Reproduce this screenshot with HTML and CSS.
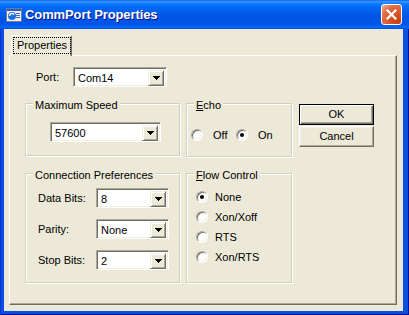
FILE: index.html
```html
<!DOCTYPE html>
<html>
<head>
<meta charset="utf-8">
<link rel="stylesheet" href="styles.css">
</head>
<body>
<div class="window">
  <div class="titlebar">
    <svg class="app-icon" width="16" height="16" viewBox="0 0 16 16">
      <rect x="0.5" y="1.5" width="15" height="13" fill="#f4f4f4" stroke="#6d7b99"/>
      <rect x="1" y="2" width="14" height="2" fill="#2a5bd7"/>
      <circle cx="6" cy="9" r="4" fill="#1f6fe0"/>
      <path d="M3.5 9a2.5 2.5 0 0 1 4.5-1.5" stroke="#fff" stroke-width="1.3" fill="none"/>
      <rect x="10" y="6" width="4" height="1" fill="#3a6bd0"/>
      <rect x="10" y="8" width="4" height="1" fill="#3a6bd0"/>
      <rect x="10" y="10" width="4" height="1" fill="#3a6bd0"/>
    </svg>
    <span class="title">CommPort Properties</span>
    <span class="close">
      <svg width="11" height="11" viewBox="0 0 11 11"><path d="M1.5 1.5l8 8M9.5 1.5l-8 8" stroke="#fff" stroke-width="2.2" stroke-linecap="square"/></svg>
    </span>
  </div>
  <div class="client">
    <div class="tabs">
      <div class="tab"><span class="focus">Properties</span></div>
    </div>
    <div class="page">
      <div class="port-row">
        <span class="lbl port-lbl">Port:</span>
        <div class="combo w-port"><span class="value">Com14</span><span class="dd"><svg width="7" height="4" viewBox="0 0 7 4"><path d="M0 0h7v1H0zM1 1h5v1H1zM2 2h3v1H2zM3 3h1v1H3z"/></svg></span></div>
      </div>
      <div class="grid">
        <div class="group speed">
          <div class="legend">Maximum Speed</div>
          <div class="combo w-speed"><span class="value">57600</span><span class="dd"><svg width="7" height="4" viewBox="0 0 7 4"><path d="M0 0h7v1H0zM1 1h5v1H1zM2 2h3v1H2zM3 3h1v1H3z"/></svg></span></div>
        </div>
        <div class="group echo">
          <div class="legend"><u>E</u>cho</div>
          <div class="echo-opts">
            <div class="opt echo-opt"><span class="radio"></span><span>Off</span></div>
            <div class="opt echo-opt"><span class="radio on"></span><span>On</span></div>
          </div>
        </div>
        <div class="buttons">
          <div class="btn default"><span class="btn-in">OK</span></div>
          <div class="btn"><span class="btn-in">Cancel</span></div>
        </div>
        <div class="group conn">
          <div class="legend">Connection Preferences</div>
          <div class="conn-rows">
            <div class="conn-row"><span class="lbl conn-lbl">Data Bits:</span><div class="combo w-conn"><span class="value">8</span><span class="dd"><svg width="7" height="4" viewBox="0 0 7 4"><path d="M0 0h7v1H0zM1 1h5v1H1zM2 2h3v1H2zM3 3h1v1H3z"/></svg></span></div></div>
            <div class="conn-row"><span class="lbl conn-lbl">Parity:</span><div class="combo w-conn"><span class="value">None</span><span class="dd"><svg width="7" height="4" viewBox="0 0 7 4"><path d="M0 0h7v1H0zM1 1h5v1H1zM2 2h3v1H2zM3 3h1v1H3z"/></svg></span></div></div>
            <div class="conn-row"><span class="lbl conn-lbl">Stop Bits:</span><div class="combo w-conn"><span class="value">2</span><span class="dd"><svg width="7" height="4" viewBox="0 0 7 4"><path d="M0 0h7v1H0zM1 1h5v1H1zM2 2h3v1H2zM3 3h1v1H3z"/></svg></span></div></div>
          </div>
        </div>
        <div class="group flow">
          <div class="legend"><u>F</u>low Control</div>
          <div class="flow-opts">
            <div class="opt flow-opt"><span class="radio on"></span><span>None</span></div>
            <div class="opt flow-opt"><span class="radio"></span><span>Xon/Xoff</span></div>
            <div class="opt flow-opt"><span class="radio"></span><span>RTS</span></div>
            <div class="opt flow-opt"><span class="radio"></span><span>Xon/RTS</span></div>
          </div>
        </div>
      </div>
    </div>
  </div>
</div>
</body>
</html>
```
FILE: styles.css
```css
* { box-sizing: border-box; }
html, body { margin: 0; padding: 0; }
body {
  font-family: "Liberation Sans", Arial, sans-serif;
  font-size: 11px;
  color: #000;
  background: #fff;
}
.window {
  width: 409px;
  height: 315px;
  display: flex;
  flex-direction: column;
  background: #0b4fe2;
  box-shadow: inset 1px 0 0 #0831d9, inset -1px 0 0 #00138c, inset 0 -1px 0 #00138c;
}
.titlebar {
  height: 29px;
  flex: none;
  display: flex;
  align-items: center;
  padding: 0 7px 0 6px;
  color: #fff;
  background: linear-gradient(to bottom, #0058e6 0%, #3a93ff 4%, #288eff 8%, #127dff 12%, #036ffc 20%, #0262ee 36%, #0057e5 56%, #0054e3 72%, #0055eb 84%, #005bf5 88%, #026afe 92%, #0062ef 96%, #0052d6 100%);
}
.app-icon { flex: none; margin-right: 3px; }
.title {
  flex: 1;
  font-weight: bold;
  font-size: 13px;
  letter-spacing: -0.1px;
  text-shadow: 1px 1px 0 #0f1089;
}
.close {
  width: 21px;
  height: 21px;
  border: 1px solid #fff;
  border-radius: 3px;
  display: flex;
  align-items: center;
  justify-content: center;
  background: radial-gradient(circle at 85% 85%, #c8400f 0%, #dc5a2c 45%, #e0704a 70%, #f3b79f 100%);
}
.client {
  flex: 1;
  margin: 0 6px 4px 4px;
  background: #ece9d8;
  padding: 6px 6px 6px 5px;
  display: flex;
  flex-direction: column;
}
.tabs {
  height: 20px;
  flex: none;
  display: flex;
  padding-left: 2px;
}
.tab {
  width: 61px;
  height: 21px;
  position: relative;
  z-index: 1;
  background: #ece9d8;
  border-top: 1px solid #fff;
  border-left: 1px solid #fff;
  border-right: 1px solid #716f64;
  border-radius: 2px 2px 0 0;
  box-shadow: inset -1px 0 0 #aca899;
  padding: 1px 0 0 1px;
}
.focus {
  display: block;
  width: 58px;
  height: 17px;
  border: 1px dotted #000;
  text-align: center;
  line-height: 15px;
}
.page {
  flex: 1;
  border: 1px solid;
  border-color: #fff #716f64 #716f64 #fff;
  box-shadow: inset -1px -1px 0 #aca899;
}
.port-row {
  display: flex;
  align-items: center;
  height: 20px;
  margin: 11px 0 0 26px;
}
.lbl { white-space: nowrap; }
.port-lbl { width: 37px; }
.combo {
  display: flex;
  height: 20px;
  background: #fff;
  border: 1px solid;
  border-color: #aca899 #fff #fff #aca899;
  box-shadow: inset 1px 1px 0 #716f64, inset -1px -1px 0 #f1efe2;
  padding: 1px;
}
.combo .value {
  flex: 1;
  padding-left: 3px;
  padding-top: 1px;
  line-height: 16px;
}
.combo .dd {
  width: 16px;
  height: 16px;
  margin-top: 1px;
  margin-right: 1px;
  background: #ece9d8;
  border: 1px solid;
  border-color: #f1efe2 #716f64 #716f64 #f1efe2;
  box-shadow: inset 1px 1px 0 #fff, inset -1px -1px 0 #aca899;
  display: flex;
  align-items: center;
  justify-content: center;
}
.combo .dd svg { display: block; shape-rendering: crispEdges; }
.w-port { width: 94px; }
.w-speed { width: 111px; margin: 10px 0 0 24px; }
.w-conn { width: 73px; }
.grid {
  display: grid;
  grid-template-columns: 155px 106px 76px;
  grid-template-rows: 54px 110px;
  column-gap: 6px;
  row-gap: 16px;
  margin-top: 16px;
  padding-left: 15px;
}
.group {
  border: 1px solid #d0d0bf;
  box-shadow: inset 1px 1px 0 #fff, 1px 1px 0 #fff;
}
.speed { height: 53px; }
.legend {
  display: table;
  margin: -5px 0 0 7px;
  padding: 0 2px;
  line-height: 13px;
  background: #ece9d8;
}
.opt {
  display: flex;
  align-items: center;
}
.radio {
  flex: none;
  width: 12px;
  height: 12px;
  border-radius: 50%;
  background: #fff;
  border: 1px solid;
  border-color: #aca899 #fff #fff #aca899;
  box-shadow: inset 1px 1px 0 #716f64, inset -1px -1px 0 #f1efe2;
  display: flex;
  align-items: center;
  justify-content: center;
}
.radio.on::after {
  content: "";
  width: 4px;
  height: 4px;
  border-radius: 50%;
  background: #000;
}
.echo-opts {
  display: flex;
  margin: 16px 0 0 4px;
}
.echo-opt { width: 45px; height: 13px; gap: 10px; }
.flow-opts { margin: 5px 0 0 9px; }
.flow-opt { height: 20px; gap: 7px; }
.conn-rows {
  display: flex;
  flex-direction: column;
  gap: 11px;
  margin: 6px 0 0 12px;
}
.conn-row { display: flex; align-items: center; height: 20px; }
.conn-lbl { width: 58px; }
.buttons {
  display: flex;
  flex-direction: column;
  align-items: flex-end;
  gap: 1px;
  padding-top: 1px;
}
.btn {
  width: 75px;
  height: 21px;
  background: #ece9d8;
  border: 1px solid;
  border-color: #fff #716f64 #716f64 #fff;
  box-shadow: inset -1px -1px 0 #aca899, inset 1px 1px 0 #f1efe2;
  display: flex;
  align-items: center;
  justify-content: center;
}
.btn.default {
  border: 1px solid #000;
  box-shadow: inset 1px 1px 0 #fff, inset -1px -1px 0 #716f64, inset -2px -2px 0 #aca899;
}
.btn-in { line-height: 13px; }
```
